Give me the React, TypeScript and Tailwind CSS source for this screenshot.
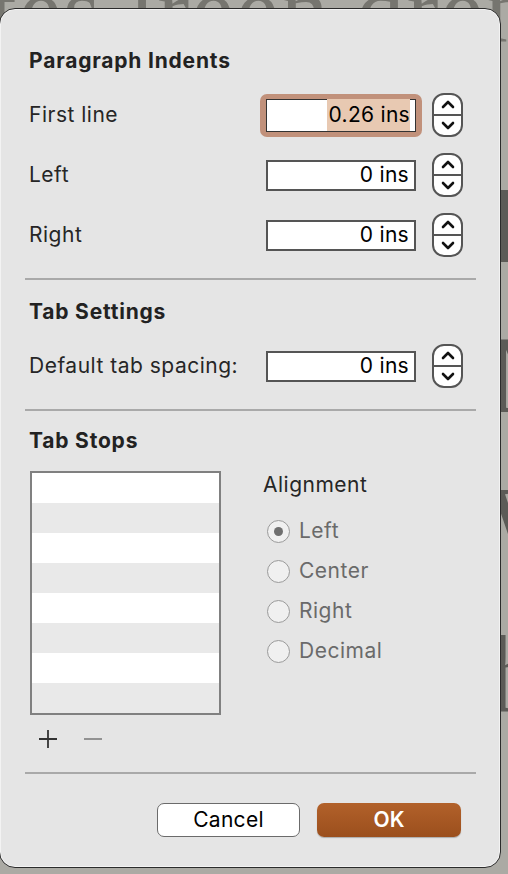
import React from "react";

function Stepper() {
  return (
    <div className="flex h-[44px] w-[31px] flex-col overflow-hidden rounded-[12px] border-2 border-[#555] bg-white">
      <div className="flex flex-1 items-center justify-center border-b-2 border-[#555]">
        <svg width="14" height="9" viewBox="0 0 14 9"><path d="M2 7 L7 2 L12 7" fill="none" stroke="#111" strokeWidth="2.6" strokeLinecap="round" strokeLinejoin="round" /></svg>
      </div>
      <div className="flex flex-1 items-center justify-center">
        <svg width="14" height="9" viewBox="0 0 14 9"><path d="M2 2 L7 7 L12 2" fill="none" stroke="#111" strokeWidth="2.6" strokeLinecap="round" strokeLinejoin="round" /></svg>
      </div>
    </div>
  );
}

function Field({ value }: { value: string }) {
  return (
    <div className="flex h-[31px] w-[150px] items-center justify-end border-2 border-[#555] bg-white pr-[5px] text-[21px] tracking-[0.3px] text-black">
      {value}
    </div>
  );
}

function Row({ label, children }: { label: string; children: React.ReactNode }) {
  return (
    <div className="flex h-[60px] items-center">
      <div className="w-[241px] pl-[4px] text-[21px] tracking-[0.5px] text-[#262626]">{label}</div>
      {children}
      <div className="ml-[16px]"><Stepper /></div>
    </div>
  );
}

function Radio({ label, checked }: { label: string; checked?: boolean }) {
  return (
    <div className="flex h-[40px] items-center">
      <div className="flex h-[23px] w-[23px] items-center justify-center rounded-full border-[1.5px] border-[#9a9a9a] bg-[#f0f0f0]">
        {checked && <div className="h-[9px] w-[9px] rounded-full bg-[#6f6f6f]" />}
      </div>
      <span className="ml-[9px] text-[21px] tracking-[0.5px] text-[#6a6a6a]">{label}</span>
    </div>
  );
}

export default function App() {
  return (
    <div className="relative h-[874px] w-[508px] overflow-hidden bg-[#abaaa4] font-['Inter',sans-serif]">
      <div className="absolute left-[-10px] top-[-62px] whitespace-nowrap font-['Liberation_Serif',serif] text-[96px] tracking-[2px] text-[#76756f] blur-[0.6px]">
        tes lreen drenni
      </div>
      <div className="absolute left-[488px] top-[150px] flex flex-col font-['Liberation_Serif',serif] text-[110px] leading-[150px] text-[#5c5b57] blur-[0.6px]">
        <span>B</span>
        <span>M</span>
        <span>W</span>
        <span>h</span>
      </div>

      <div className="relative ml-[-1px] mt-[8px] h-[860px] w-[502px] rounded-[16px] border border-[#2b2b2b] bg-[#e5e5e5] px-[25px] shadow-[inset_0_0_0_1px_#f3f3f3]">
        <div className="pl-[4px] pt-[40px] text-[21px] font-bold leading-[24px] tracking-[0.8px] text-[#222]">Paragraph Indents</div>
        <div className="mt-[12px]">
          <div className="flex h-[60px] items-center">
            <div className="w-[235px] pl-[4px] text-[21px] tracking-[0.5px] text-[#262626]">First line</div>
            <div className="flex h-[43px] w-[162px] items-center justify-center rounded-[7px] bg-[#c1917b]">
              <div className="flex h-[33px] w-[150px] items-center justify-end border border-[#333] bg-white pr-[5px] text-[21px] tracking-[0.3px] text-black">
                <span className="bg-[#e8c9b2] pl-[2px]">0.26 ins</span>
              </div>
            </div>
            <div className="ml-[10px]"><Stepper /></div>
          </div>
          <Row label="Left"><Field value="0 ins" /></Row>
          <Row label="Right"><Field value="0 ins" /></Row>
        </div>
        <div className="mt-[13px] h-[2px] w-[451px] bg-[#a9a9a9]" />
        <div className="mt-[20px] pl-[4px] text-[21px] font-bold leading-[24px] tracking-[0.8px] text-[#222]">Tab Settings</div>
        <div className="mt-[12px]">
          <Row label="Default tab spacing:"><Field value="0 ins" /></Row>
        </div>
        <div className="mt-[13px] h-[2px] w-[451px] bg-[#a9a9a9]" />
        <div className="mt-[18px] pl-[4px] text-[21px] font-bold leading-[24px] tracking-[0.8px] text-[#222]">Tab Stops</div>
        <div className="mt-[18px] flex">
          <div className="flex flex-col pl-[5px]">
            <div className="flex h-[244px] w-[191px] flex-col border-2 border-[#808080]">
              {[0, 1, 2, 3, 4, 5, 6, 7].map((i) => (
                <div key={i} className={i % 2 === 0 ? "h-[30px] bg-white" : "h-[30px] bg-[#e9e9e9]"} />
              ))}
            </div>
            <div className="mt-[12px] flex h-[24px] items-center pl-[9px]">
              <svg width="18" height="18" viewBox="0 0 18 18"><path d="M9 0 V18 M0 9 H18" stroke="#333" strokeWidth="1.8" /></svg>
              <svg className="ml-[27px]" width="18" height="18" viewBox="0 0 18 18"><path d="M0 9 H18" stroke="#888" strokeWidth="1.8" /></svg>
            </div>
          </div>
          <div className="ml-[42px] flex flex-col">
            <div className="mt-[2px] text-[21px] leading-[24px] tracking-[0.5px] text-[#262626]">Alignment</div>
            <div className="ml-[4px] mt-[14px] flex flex-col">
              <Radio label="Left" checked />
              <Radio label="Center" />
              <Radio label="Right" />
              <Radio label="Decimal" />
            </div>
          </div>
        </div>
        <div className="mt-[21px] h-[2px] w-[451px] bg-[#a9a9a9]" />
        <div className="mt-[29px] flex justify-end gap-[17px] pr-[14px]">
          <button className="h-[34px] w-[143px] rounded-[7px] border-[1.5px] border-[#6b6b6b] bg-white text-[21px] tracking-[0.3px] text-black">Cancel</button>
          <button className="h-[34px] w-[144px] rounded-[7px] bg-gradient-to-b from-[#b2612a] to-[#9b4f1d] text-[21px] font-semibold text-white shadow-[0_1px_1px_rgba(0,0,0,0.25)]">OK</button>
        </div>
      </div>
    </div>
  );
}
